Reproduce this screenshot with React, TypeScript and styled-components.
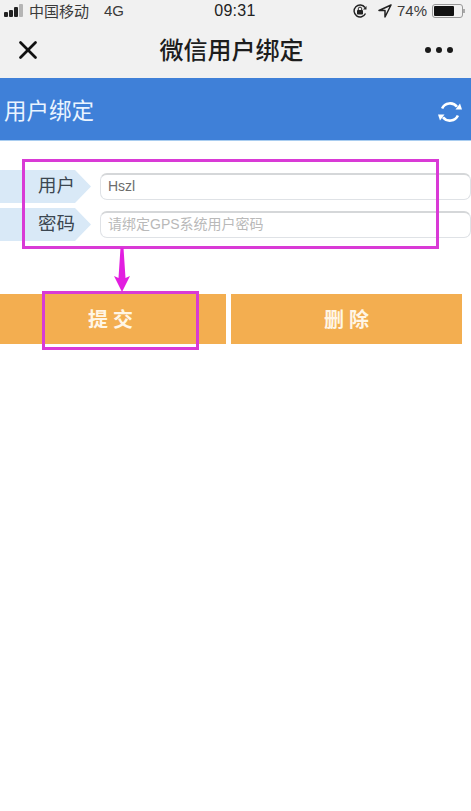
import React from 'react';
import styled, { createGlobalStyle } from 'styled-components';
import { X } from 'lucide-react';

const GlobalStyle = createGlobalStyle`
  html, body {
    margin: 0;
    padding: 0;
    background: #ffffff;
  }
  body {
    font-family: "Liberation Sans", "Noto Sans CJK SC", sans-serif;
  }
`;

const Page = styled.div`
  position: relative;
  width: 471px;
  height: 811px;
  overflow: hidden;
  background: #fff;
`;

const TopChrome = styled.div`
  height: 78px;
  background: #f1f1f1;
  color: #1c1c1c;
`;

const StatusBar = styled.div`
  height: 18px;
  display: grid;
  grid-template-columns: 1fr auto 1fr;
  align-items: center;
  padding: 0 8px 0 4px;
  font-size: 15px;
`;

const StatusLeft = styled.div`
  display: flex;
  align-items: center;
  gap: 6px;
  color: #3a3a3a;
`;

const StatusRight = styled.div`
  display: flex;
  align-items: center;
  justify-content: flex-end;
  gap: 5px;
  color: #3a3a3a;
`;

const Clock = styled.div`
  margin-left: 3px;
  font-size: 16px;
  font-weight: 500;
  color: #222;
  letter-spacing: 0.3px;
`;

const Signal = styled.div`
  display: flex;
  align-items: flex-end;
  gap: 1px;
  height: 13px;
`;

const SignalBar = styled.i<{ $h: number; $off?: boolean }>`
  display: block;
  width: 4px;
  height: ${p => p.$h}px;
  border-radius: 1px;
  background: ${p => (p.$off ? '#b5b5b5' : '#222')};
`;

const Network = styled.span`
  margin-left: 9px;
`;

const Battery = styled.div`
  width: 31px;
  height: 14px;
  box-sizing: border-box;
  border: 1px solid #999;
  border-radius: 3px;
  padding: 1px;
  position: relative;

  &::after {
    content: '';
    position: absolute;
    right: -3px;
    top: 4px;
    width: 2px;
    height: 4px;
    background: #aaa;
  }
`;

const BatteryFill = styled.div`
  width: 74%;
  height: 100%;
  background: #111;
  border-radius: 1px;
`;

const NavBar = styled.div`
  height: 60px;
  display: grid;
  grid-template-columns: 56px 1fr 64px;
  align-items: center;
  padding-top: 4px;
  box-sizing: border-box;
`;

const CloseBox = styled.div`
  display: flex;
  justify-content: center;
  align-items: center;
  color: #111;
`;

const NavTitle = styled.div`
  padding-bottom: 4px;
  text-align: center;
  font-size: 24px;
  font-weight: 500;
  color: #1d1d1d;
`;

const MoreDots = styled.div`
  display: flex;
  gap: 5px;
  padding-left: 18px;
`;

const Dot = styled.i`
  display: block;
  width: 6px;
  height: 6px;
  border-radius: 50%;
  background: #1a1a1a;
`;

const Banner = styled.div`
  height: 63px;
  background: #3f80d8;
  border-bottom: 1px solid #a9cdf0;
  box-sizing: border-box;
  display: flex;
  align-items: center;
  justify-content: space-between;
  padding: 0 8px 0 4px;
  color: #eaf4ff;
  font-size: 22.5px;
`;

const RefreshIcon = styled.svg`
  margin-top: 5px;
`;

const Form = styled.div`
  display: flex;
  flex-direction: column;
  gap: 5px;
  padding-top: 29px;
`;

const Row = styled.div`
  display: flex;
  align-items: center;
  height: 33px;
  gap: 9px;
`;

const Label = styled.div`
  width: 91px;
  height: 100%;
  box-sizing: border-box;
  padding-left: 38px;
  background: #d9e9f7;
  clip-path: polygon(0 0, 75px 0, 91px 50%, 75px 100%, 0 100%);
  color: #3b4650;
  font-size: 18.5px;
  line-height: 32px;
`;

const Field = styled.div<{ $placeholder?: boolean }>`
  flex: 1;
  height: 27px;
  box-sizing: border-box;
  border: 1px solid #dfe2e6;
  border-top: 2px solid #d5d7d9;
  border-radius: 7px;
  padding-left: 7px;
  font-size: 14px;
  line-height: 23px;
  color: ${p => (p.$placeholder ? '#b9b9b9' : '#6d6d6d')};
`;

const Buttons = styled.div`
  display: flex;
  gap: 5px;
  width: 462px;
  margin-top: 53px;
`;

const ActionButton = styled.div<{ $w: number; $indent?: number }>`
  width: ${p => p.$w}px;
  height: 50px;
  background: #f3ae50;
  color: #fff6e6;
  font-size: 20px;
  font-weight: 700;
  letter-spacing: 5px;
  line-height: 52px;
  text-align: center;
  text-indent: ${p => p.$indent ?? 0}px;
`;

const Marker = styled.div<{ $l: number; $t: number; $w: number; $h: number }>`
  position: absolute;
  left: ${p => p.$l}px;
  top: ${p => p.$t}px;
  width: ${p => p.$w}px;
  height: ${p => p.$h}px;
  box-sizing: border-box;
  border: 3px solid #d93ad6;
`;

const ArrowMark = styled.svg`
  position: absolute;
  left: 114px;
  top: 248px;
`;

const App: React.FC = () => (
  <Page>
    <GlobalStyle />
    <TopChrome>
      <StatusBar>
        <StatusLeft>
          <Signal>
            <SignalBar $h={5} />
            <SignalBar $h={7} />
            <SignalBar $h={10} />
            <SignalBar $h={13} $off />
          </Signal>
          <span>中国移动</span>
          <Network>4G</Network>
        </StatusLeft>
        <Clock>09:31</Clock>
        <StatusRight>
          <svg width="16" height="16" viewBox="0 0 16 16" fill="none">
            <path d="M13.5 10.5A6 6 0 1 1 13 4.5" stroke="#222" strokeWidth="1.4" />
            <path d="M14.5 3v3.5H11" fill="#222" />
            <rect x="5" y="7" width="6" height="4.5" rx="0.8" fill="#222" />
            <path d="M6.300 7V5.800a1.700 1.700 0 0 1 3.400 0V7" stroke="#222" strokeWidth="1" />
          </svg>
          <svg width="14" height="14" viewBox="0 0 14 14" fill="none" style={{ marginLeft: 5 }}>
            <path d="M13 1 1 6.500h6V13z" stroke="#222" strokeWidth="1.500" strokeLinejoin="round" />
          </svg>
          <span>74%</span>
          <Battery>
            <BatteryFill />
          </Battery>
        </StatusRight>
      </StatusBar>
      <NavBar>
        <CloseBox>
          <X size={30} strokeWidth={2.2} />
        </CloseBox>
        <NavTitle>微信用户绑定</NavTitle>
        <MoreDots>
          <Dot />
          <Dot />
          <Dot />
        </MoreDots>
      </NavBar>
    </TopChrome>

    <Banner>
      <span>用户绑定</span>
      <RefreshIcon width="26" height="26" viewBox="0 0 26 26" fill="none">
        <path d="M5.100 9.500A8.800 8.800 0 0 1 20 7.700" stroke="#fff" strokeWidth="2.600" />
        <path d="M20.900 16.500A8.800 8.800 0 0 1 6 18.300" stroke="#fff" strokeWidth="2.600" />
        <path d="M18.500 10.500h6.500l-2-6z" fill="#fff" />
        <path d="M7.500 15.500H1l2 6z" fill="#fff" />
      </RefreshIcon>
    </Banner>

    <Form>
      <Row>
        <Label>用户</Label>
        <Field>Hszl</Field>
      </Row>
      <Row>
        <Label>密码</Label>
        <Field $placeholder>请绑定GPS系统用户密码</Field>
      </Row>
    </Form>

    <Buttons>
      <ActionButton $w={226}>提交</ActionButton>
      <ActionButton $w={231} $indent={5}>删除</ActionButton>
    </Buttons>

    <Marker $l={22} $t={159} $w={417} $h={90} />
    <Marker $l={42} $t={291} $w={157} $h={59} />
    <ArrowMark width="16" height="44" viewBox="0 0 16 44">
      <path d="M6.500 0h3l2 30L16 28l-8 16-8-16 4.500 2z" fill="#e21ee0" />
    </ArrowMark>
  </Page>
);

export default App;
